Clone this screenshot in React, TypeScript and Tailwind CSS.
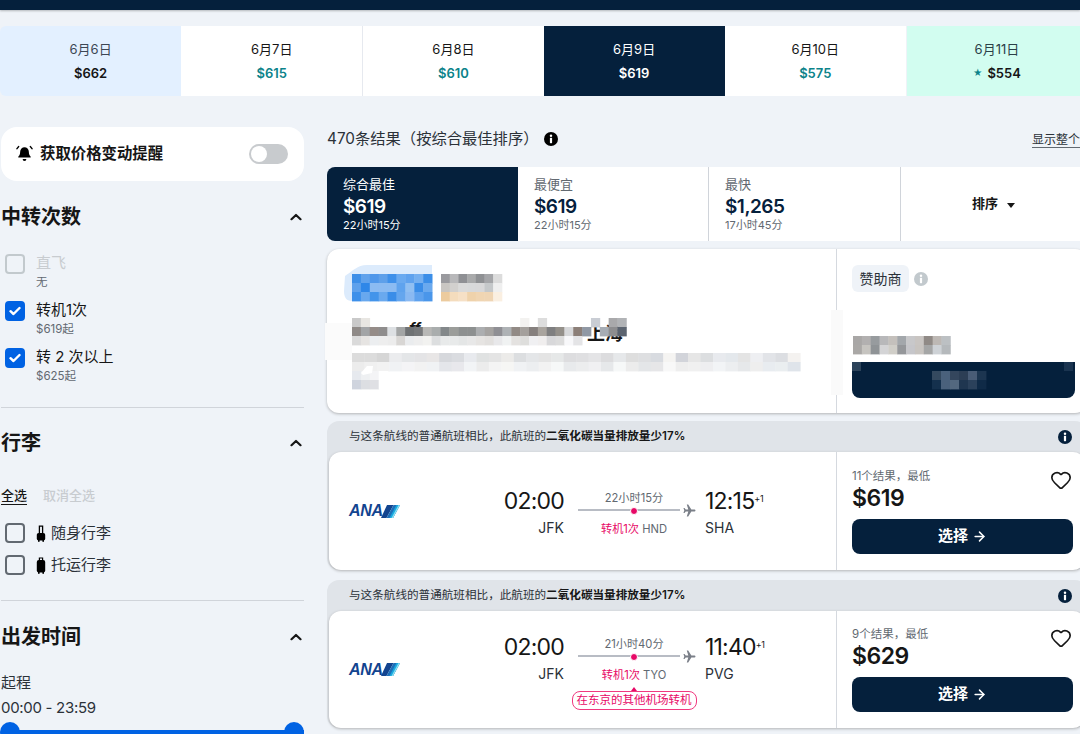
import { ArrowRight, Heart } from 'lucide-react';

const dates = [
  { day: '6月6日', price: '$662', cell: 'bg-[#e3f0ff] rounded-l-md', dayCls: 'text-[#3d4654]', priceCls: 'text-[#161616]' },
  { day: '6月7日', price: '$615', cell: 'bg-white', dayCls: 'text-[#161616]', priceCls: 'text-[#0c838a]' },
  { day: '6月8日', price: '$610', cell: 'bg-white border-l border-[#e6e9ef]', dayCls: 'text-[#161616]', priceCls: 'text-[#0c838a]' },
  { day: '6月9日', price: '$619', cell: 'bg-[#05203c]', dayCls: 'text-white', priceCls: 'text-white' },
  { day: '6月10日', price: '$575', cell: 'bg-white', dayCls: 'text-[#161616]', priceCls: 'text-[#0c838a]' },
  { day: '6月11日', price: '$554', cell: 'bg-[#d2fdf0] ml-px', dayCls: 'text-[#2c4048]', priceCls: 'text-[#161616]', star: true },
];

// 가려진 영역의 모자이크 색
const titleTop = ['#c9c9c9', '#e8e6e2', '', '', '', '', '', '', '', '', '', '', '', '', '', '', '', '', '', '#f3f2f0', '', '#dddddd', '', '', '', '', '', '#c9cdd4', '', '#a9a9ab', '#b1b3b6'];
const titleMid = ['#8f8a87', '#a2a4a6', '#958c88', '#8f8d8d', '#dde0e3', '#a3a5a5', '#6f7274', '#77797b', '#b8b8b6', '#a9adad', '#83888a', '#9b9d9a', '#8d9090', '#8d9090', '#acaeb0', '#a5a3a1', '#8f8f94', '#aeb2b5', '#928a85', '#a4a09c', '#86807e', '#a9a49e', '#7f7f80', '#94908a', '#d7d8da', '#8c7f78', '#9098a4', '', '#a6acb4', '#8d8d8f', '#5c6470'];
const titleBot = ['#dadada', '#e6e4e2', '#eceef0', '#eeeeee', '#ececec', '#d8d6d4', '#eaecee', '#eeeeee', '#f2f2f0', '#dcdedf', '#e8eaea', '#e8eaea', '#e4e6e6', '#e8e8e8', '#e6e4e2', '#e2e0de', '#e8e8ea', '#f0f2f2', '#e4e2e0', '#dededc', '#f0f0f2', '#f0eeee', '#d8d8da', '#dcdcdc', '#f8f8fa', '#e4e4e6'];
const descTop = ['#dcdcdc', '#dcdcdc', '#d6d6d6', '#ebecee', '#e4e6e8', '#e4e4e6', '#e8e6e6', '#d6d8dc', '#dadce0', '#e8eaee', '#e0e2e2', '#e4e4e4', '#ecebe9', '#dcdee0', '#e4e6e8', '#e4e4e4', '#e6e8e8', '#dddddf', '#dfdfe1', '#e4e4e6', '#dcdcde', '#e6e8ea', '#dedede', '#dedfe1', '#d8dbe0', '#f5f4f2', '#d2d4da', '#e6e6e6', '#dcdee0', '#e8eaee', '#e4e8ec', '#e4e4e4', '#eeeff2', '#e2e4e8', '#dcdee2', '#f4f2f0'];
const descBot = ['#ececec', '#f0f0f0', '#f2f2f2', '#f0f2f4', '#f4f4f6', '#f2f2f2', '#f0f2f4', '#e4e6ea', '#e8e8ec', '#f2f4f6', '#ececec', '#f4f4f4', '#f6f6f4', '#f0f2f4', '#eceef0', '#f2f2f2', '#f6f8f8', '#e8eaec', '#ecedee', '#f0f0f2', '#e6e8ea', '#f6f8f8', '#ececec', '#e4e6e8', '#e6e6e8', '#f8f8f8', '#eeeeee', '#f0f0f0', '#eeeef0', '#f2f4f6', '#eceef0', '#e6e8ea', '#eeeeee', '#e8ecf0', '#eaeef0', '#dfe4ea'];

const Mosaic = ({ x, y, w, h, rows }: { x: number; y: number; w: number; h: number; rows: string[][] }) => (
  <>
    {rows.map((row, r) =>
      row.map((fill, c) =>
        fill ? <rect key={`${r}-${c}`} x={x + c * w} y={y + r * h} width={w + 0.4} height={h + 0.4} fill={fill} /> : null
      )
    )}
  </>
);

const Chevron = () => (
  <svg width="12" height="8" viewBox="0 0 12 8" fill="none">
    <path d="M1.5 6.2 6 2l4.5 4.2" stroke="#161616" strokeWidth="2.2" strokeLinecap="round" strokeLinejoin="round" />
  </svg>
);

const InfoDot = ({ size = 14, bg = '#05203c', className = '' }: { size?: number; bg?: string; className?: string }) => (
  <svg width={size} height={size} viewBox="0 0 14 14" className={className}>
    <circle cx="7" cy="7" r="7" fill={bg} />
    <circle cx="7" cy="3.7" r="1.25" fill="#fff" />
    <rect x="5.9" y="5.8" width="2.2" height="5.4" rx="0.6" fill="#fff" />
  </svg>
);

const Check = ({ checked, disabled }: { checked?: boolean; disabled?: boolean }) => (
  <span
    className={`flex h-5 w-5 shrink-0 items-center justify-center rounded-[4px] border-2 ${
      checked ? 'border-[#0062e3] bg-[#0062e3]' : disabled ? 'border-[#c2c9cd]' : 'border-[#626971]'
    }`}
  >
    {checked && (
      <svg width="12" height="10" viewBox="0 0 12 10" fill="none">
        <path d="M1.5 5.2 4.5 8l6-6" stroke="#fff" strokeWidth="2.4" strokeLinecap="round" strokeLinejoin="round" />
      </svg>
    )}
  </span>
);

const SectionHead = ({ title, className }: { title: string; className: string }) => (
  <div className={`flex items-center justify-between pr-[2px] ${className}`}>
    <h2 className="text-[20px] leading-[28px] font-bold text-[#161616]">{title}</h2>
    <Chevron />
  </div>
);

const StopOption = ({ label, sub, checked, disabled }: { label: string; sub: string; checked?: boolean; disabled?: boolean }) => (
  <div className="flex h-[47px] gap-[11px] pl-1">
    <div className="pt-[2px]">
      <Check checked={checked} disabled={disabled} />
    </div>
    <div>
      <div className={`text-[15px] leading-[22px] ${disabled ? 'text-[#c8ccd0]' : 'text-[#161616]'}`}>{label}</div>
      <div className="text-[11.5px] leading-[16px] text-[#626971]">{sub}</div>
    </div>
  </div>
);

const BagIcon = ({ small }: { small?: boolean }) => (
  <svg width="10" height="17" viewBox="0 0 10 17">
    {small ? (
      <>
        <path d="M3.4 8V1.2h3.2V8" fill="none" stroke="#000" strokeWidth="1.3" />
        <rect x="0.8" y="8" width="8.4" height="7.6" rx="1.8" fill="#000" />
        <rect x="2" y="15" width="1.6" height="1.8" fill="#000" />
        <rect x="6.4" y="15" width="1.6" height="1.8" fill="#000" />
      </>
    ) : (
      <>
        <path d="M3.4 3.5V1h3.2v2.5" fill="none" stroke="#000" strokeWidth="1.2" />
        <rect x="0.8" y="3" width="8.4" height="12.6" rx="2" fill="#000" />
        <rect x="2" y="15" width="1.6" height="1.8" fill="#000" />
        <rect x="6.4" y="15" width="1.6" height="1.8" fill="#000" />
      </>
    )}
  </svg>
);

const BagOption = ({ label, small }: { label: string; small?: boolean }) => (
  <div className="flex h-[32px] items-center pl-1">
    <Check />
    <span className="ml-[11px] mr-[5px] flex">
      <BagIcon small={small} />
    </span>
    <span className="text-[15px] text-[#2b3138]">{label}</span>
  </div>
);

const SortTab = ({ title, price, sub, active, className }: { title: string; price: string; sub: string; active?: boolean; className: string }) => (
  <div className={`pt-2 pl-4 ${active ? 'rounded-l-lg bg-[#05203c] text-white' : 'bg-white'} ${className}`}>
    <div className={`text-[13px] leading-[18px] ${active ? 'text-white' : 'text-[#626971]'}`}>{title}</div>
    <div className={`mt-px text-[19px] leading-[25px] font-semibold tracking-[-0.5px] ${active ? 'text-white' : 'text-[#05203c]'}`}>{price}</div>
    <div className={`-mt-px text-[11px] leading-[14px] ${active ? 'text-white' : 'text-[#626971]'}`}>{sub}</div>
  </div>
);

const AnaLogo = () => (
  <div className="flex w-[52px] items-center">
    <span className="text-[16px] leading-none font-bold tracking-[-0.3px] text-[#13448f] italic [font-family:'Liberation_Sans',sans-serif]">
      ANA
    </span>
    <svg width="19" height="13" viewBox="0 0 19 13" className="-ml-[2px]">
      <path d="M6 0h6.5L5.5 13H0Z" fill="#13448f" />
      <path d="M12.5 0H19l-7 13H5.5Z" fill="#1d6fb8" />
      <path d="M15.5 0H19l-7 13H8.5Z" fill="#19a9e0" />
      <path d="M17.5 0H19l-7 13h-1.5Z" fill="#8fe0f0" />
    </svg>
  </div>
);

const PlaneIcon = () => (
  <svg width="13" height="13" viewBox="0 0 24 24" className="shrink-0">
    <path d="M23 12c0-1-1-1.8-2.4-1.8h-5.2L9.6 1H7l2.8 9.2H5L2.8 7.4H.8L2.4 12 .8 16.6h2L5 13.8h4.8L7 23h2.6l5.8-9.2h5.2C22 13.8 23 13 23 12Z" fill="#7a7f88" />
  </svg>
);

type Flight = {
  rowCls: string;
  priceTop: string;
  depart: string;
  arrive: string;
  from: string;
  to: string;
  duration: string;
  via: string;
  note?: string;
  count: string;
  price: string;
};

const FlightCard = ({ f, className }: { f: Flight; className: string }) => (
  <div className={`rounded-xl bg-[#e0e4e9] px-[2px] ${className}`}>
    <div className="flex h-[31px] items-center justify-between pr-[13px] pl-5 text-[11.6px] text-[#2b3138]">
      <span>
        与这条航线的普通航班相比，此航班的<b className="font-semibold text-[#161616]">二氧化碳当量排放量少17%</b>
      </span>
      <InfoDot />
    </div>
    <div className={`flex rounded-xl bg-white shadow-[0_1px_3px_rgba(37,32,31,0.3)] ${f.rowCls}`}>
      <div className="flex w-[507px] shrink-0 items-center pl-5">
        <AnaLogo />
        <div className={`ml-[101px] flex items-start ${f.note ? 'mt-px' : ''}`}>
          <div className="w-[62px] text-right">
            <div className="mt-[2px] text-[23px] leading-[30px] tracking-[-0.8px] text-[#161616]">{f.depart}</div>
            <div className="mt-[2px] text-[14px] leading-[20px] text-[#2b3138]">{f.from}</div>
          </div>
          <div className="relative ml-[14px] flex w-[112px] flex-col items-center pt-[6px]">
            <div className="text-[11.2px] leading-[16px] text-[#626971]">{f.duration}</div>
            <div className="-mt-[3px] flex h-[14px] w-[118px] items-center self-start">
              <div className="relative h-[1.5px] w-[102px] bg-[#b8bcc4]">
                <span className="absolute top-[-2.5px] left-[52px] box-content h-[6px] w-[6px] rounded-full border border-white bg-[#e70866]" />
              </div>
              <span className="ml-[3px]">
                <PlaneIcon />
              </span>
            </div>
            <div className="mt-[3px] text-[11.2px] leading-[18px] whitespace-nowrap text-[#626971]">
              <span className="text-[#e70866]">{f.via.split(' ')[0]}</span> {f.via.split(' ')[1]}
            </div>
            {f.note && (
              <div className="relative mt-[7px] rounded-lg border border-[#f0397f] px-[4px] text-[11.5px] leading-[17px] whitespace-nowrap text-[#e70866]">
                <span className="absolute top-[-5px] left-1/2 -ml-[3px] h-0 w-0 border-x-[3.5px] border-b-[4px] border-x-transparent border-b-[#e70866]" />
                {f.note}
              </div>
            )}
          </div>
          <div className="ml-[15px]">
            <div className="mt-[2px] text-[23px] leading-[30px] tracking-[-0.8px] whitespace-nowrap text-[#161616]">
              {f.arrive}
              <span className="align-[7px] text-[9px] leading-none tracking-[-0.3px]">+1</span>
            </div>
            <div className="mt-[2px] text-[14px] leading-[20px] text-[#2b3138]">{f.to}</div>
          </div>
        </div>
      </div>
      <div className={`flex-1 border-l border-[#d5d9df] pl-[15px] ${f.priceTop}`}>
        <div className="flex w-[220px] items-start justify-between">
          <span className="text-[11.5px] leading-[16px] text-[#626971]">{f.count}</span>
          <Heart size={22} strokeWidth={1.8} className="mt-px text-[#161616]" />
        </div>
        <div className="-mt-[8px] text-[23px] leading-[30px] font-semibold tracking-[-0.5px] text-[#161616]">{f.price}</div>
        <div className="mt-[6px] flex h-[35px] w-[221px] items-center justify-center gap-1 rounded-lg bg-[#05203c] text-[15px] font-semibold text-white">
          选择 <ArrowRight size={15} strokeWidth={2.4} />
        </div>
      </div>
    </div>
  </div>
);

const flights: Flight[] = [
  { rowCls: 'h-[118px]', priceTop: 'pt-4', depart: '02:00', arrive: '12:15', from: 'JFK', to: 'SHA', duration: '22小时15分', via: '转机1次 HND', count: '11个结果，最低', price: '$619' },
  { rowCls: 'h-[117px]', priceTop: 'pt-[15px]', depart: '02:00', arrive: '11:40', from: 'JFK', to: 'PVG', duration: '21小时40分', via: '转机1次 TYO', note: '在东京的其他机场转机', count: '9个结果，最低', price: '$629' },
];

export default function App() {
  return (
    <div className="h-[734px] w-[1080px] overflow-hidden bg-[#eff3f8] font-['Inter','Noto_Sans_CJK_SC',sans-serif]">
      <div className="h-[10px] bg-[#05203c] shadow-[0_1px_2px_rgba(0,0,0,0.25)]" />
      <div className="w-[1087px]">
        <div className="mt-4 grid h-[70px] grid-cols-6">
          {dates.map((d) => (
            <div key={d.day} className={`flex flex-col items-center justify-center ${d.cell}`}>
              <div className={`text-[13px] leading-[20px] ${d.dayCls}`}>{d.day}</div>
              <div className={`mt-[4px] flex items-center gap-[5px] text-[13px] leading-[20px] font-semibold ${d.priceCls}`}>
                {d.star && <span className="text-[9px] text-[#0c838a]">★</span>}
                {d.price}
              </div>
            </div>
          ))}
        </div>

        <div className="mt-[31px] flex items-start">
          {/* 필터 */}
          <aside className="ml-px w-[303px] shrink-0">
            <div className="flex h-[54px] items-center justify-between rounded-2xl bg-white pr-4 pl-[15px]">
              <div className="flex items-center gap-[7px]">
                <svg width="17" height="17" viewBox="0 0 17 17">
                  <path d="M8.5 2.2a4.3 4.3 0 0 0-4.3 4.3c0 3.4-1.4 4.6-1.9 5.2-.3.4 0 .9.5.9h11.4c.5 0 .8-.5.5-.9-.5-.6-1.9-1.8-1.9-5.2a4.3 4.3 0 0 0-4.3-4.3Z" fill="#000" />
                  <path d="M6.6 14h3.8a1.9 1.9 0 0 1-3.8 0Z" fill="#000" />
                  <path d="M2.6 1.6 1 3.6M14.4 1.6l1.6 2" stroke="#000" strokeWidth="1.5" strokeLinecap="round" />
                </svg>
                <span className="text-[15.4px] font-semibold text-[#161616]">获取价格变动提醒</span>
              </div>
              <div className="flex h-5 w-[39px] items-center rounded-full bg-[#c8cbce] pl-[2px]">
                <span className="h-4 w-4 rounded-full bg-white" />
              </div>
            </div>

            <SectionHead title="中转次数" className="mt-[22px]" />
            <div className="mt-[21px]">
              <StopOption label="直飞" sub="无" disabled />
              <StopOption label="转机1次" sub="$619起" checked />
              <StopOption label="转 2 次以上" sub="$625起" checked />
            </div>

            <div className="mt-[14px] border-t border-[#d0d4da]" />
            <SectionHead title="行李" className="mt-[21px]" />
            <div className="mt-[29px] flex gap-[16px] text-[13px] leading-[18px] font-medium">
              <span className="border-b border-[#161616] text-[#161616]">全选</span>
              <span className="text-[#c8ccd0]">取消全选</span>
            </div>
            <div className="mt-[12px]">
              <BagOption label="随身行李" small />
              <BagOption label="托运行李" />
            </div>

            <div className="mt-[19px] border-t border-[#d0d4da]" />
            <SectionHead title="出发时间" className="mt-[22px]" />
            <div className="mt-[21px] text-[15px] leading-[22px] text-[#2b3138]">起程</div>
            <div className="mt-[3px] text-[15px] leading-[22px] tracking-[-0.3px] text-[#2b3138]">00:00 - 23:59</div>
            <div className="relative mt-[3px] h-5">
              <div className="absolute top-[8px] right-0 left-0 h-[6px] bg-[#0062e3]" />
              <span className="absolute top-0 left-[-1px] h-5 w-5 rounded-full bg-[#0062e3]" />
              <span className="absolute top-0 right-0 h-5 w-5 rounded-full bg-[#0062e3]" />
            </div>
          </aside>

          {/* 결과 */}
          <main className="ml-[23px] min-w-0 flex-1">
            <div className="-mt-px flex h-[26px] items-center">
              <span className="text-[15.3px] text-[#2b3138]">470条结果（按综合最佳排序）</span>
              <InfoDot size={14} bg="#000" className="ml-[5px]" />
              <span className="mt-[2px] ml-auto w-[55px] overflow-hidden border-b border-[#626971] text-[12px] leading-[15px] whitespace-nowrap text-[#2b3138]">
                显示整个月
              </span>
            </div>
            <div className="mt-[15px] flex h-[74px] gap-px">
              <SortTab title="综合最佳" price="$619" sub="22小时15分" active className="w-[191px]" />
              <SortTab title="最便宜" price="$619" sub="22小时15分" className="-ml-px w-[190px]" />
              <div className="z-10 -mx-px w-px bg-[#d0d4da]" />
              <SortTab title="最快" price="$1,265" sub="17小时45分" className="w-[191px]" />
              <div className="z-10 -mx-px w-px bg-[#d0d4da]" />
              <div className="flex flex-1 items-center bg-white pl-[71px] text-[13px] font-semibold text-[#161616]">
                排序
                <span className="mt-[2px] ml-[9px] h-0 w-0 border-x-[4.5px] border-t-[5px] border-x-transparent border-t-[#161616]" />
              </div>
            </div>

            {/* 광고 카드, 내용은 모자이크 처리됨 */}
            <div className="relative mt-2 flex h-[164px] rounded-xl bg-white shadow-[0_1px_3px_rgba(37,32,31,0.3)]">
              <div className="w-[509px] shrink-0" />
              <div className="flex-1 border-l border-[#d5d9df] pt-4 pl-[15px]">
                <div className="flex items-center gap-[5px]">
                  <span className="flex h-[27px] w-[57px] items-center justify-center rounded-md bg-[#eff3f8] text-[14px] text-[#2b3138]">赞助商</span>
                  <InfoDot size={14} bg="#c2c9cd" />
                </div>
                <div className="mt-[70px] h-9 w-[223px] rounded-b-lg bg-[#05203c]" />
              </div>
              <span className="absolute top-[75px] left-[260px] text-[18px] leading-[20px] font-bold text-[#161616]">上海</span>
              <span className="absolute top-[70px] left-[82px] text-[15px] leading-[20px] font-bold text-[#161616] italic">ff</span>
              <svg className="absolute top-0 left-0 overflow-visible" width="760" height="164">
                <g transform="translate(-327 -249)">
                  <path d="M345 276c8-5 12-11 22-11h65v36h-80c-6 0-8-4-8-10Z" fill="#dcebfc" />
                  <Mosaic x={352} y={274} w={8.9} h={9} rows={[
                    ['#3d8fe8', '#60a2ec', '#4f97ea', '#5ea0ea', '#3e90ea', '#6aaaf0', '#5fa2ee', '#74aff0', '#3b8ee8'],
                    ['#5ea1ec', '#2f87e8', '#8bbbf2', '#8bbbf2', '#8bbbf2', '#5fa3ee', '#90bff2', '#3a8de8', '#6aa9ee'],
                    ['#3d90ea', '#68a8ee', '#4394ea', '#6aa9ee', '#3a8de8', '#65a6ee', '#8ab9f2', '#5fa2ee', '#4a96ea'],
                  ]} />
                  <Mosaic x={441} y={274} w={8.7} h={9} rows={[
                    ['#9a9a9e', '#b8b8ba', '#8f9094', '#a9aaab', '#8f9194', '#a5a6a9', '#dcdcdc'],
                    ['#c9c6c2', '#d2d0ce', '#dadada', '#d8d9da', '#d8d8d9', '#c5c8ca', '#efefef'],
                    ['#eccb9e', '#f4dcbd', '#f6e0c6', '#efd2ab', '#f0d5b2', '#efd5b4', '#faefe1'],
                  ]} />
                  <rect x="325" y="323" width="27" height="37" fill="#fbfbfb" />
                  <rect x="831" y="310" width="12" height="85" fill="#fafafa" />
                  <Mosaic x={352} y={318} w={8.85} h={9} rows={[titleTop, titleMid, titleBot]} />
                  <Mosaic x={352} y={353} w={12.45} h={9} rows={[descTop, descBot]} />
                  <Mosaic x={352} y={371} w={8.9} h={9} rows={[['#e6e9ee', '#eef0f2', '#f4f4f6', '#ffffff'], ['#cfd4de', '#dcdee2', '#dfe0e4', '#ffffff']]} />
                  <path d="M361 373l6-7h6l-1 7-9 2Z" fill="#fff" />
                  <Mosaic x={853} y={336} w={8.85} h={9} rows={[
                    ['#a9a7a6', '#b2b0b0', '#979b9e', '#b8b8ba', '#c4c0bc', '#a3a7ab', '#c8c8ca', '#c9c5c2', '#908a86', '#bdb8b4', '#bcc0c3'],
                    ['#aaa8a6', '#c6c4c0', '#8f9396', '#d4d4d6', '#d0cec8', '#95979a', '#c6c6ca', '#c8c4c0', '#a5a6a6', '#ced2d6', '#b5b9bc'],
                  ]} />
                  <Mosaic x={932} y={371} w={9} h={9} rows={[
                    ['#34495f', '#4a617c', '#34465d', '#2c3e55', '#495c76', '#1c3550'],
                    ['#14304d', '#4a617c', '#53687f', '#1f3650', '#2b415b', '#0f2a47'],
                  ]} />
                  <rect x="852" y="362" width="9" height="9" fill="#2c435a" />
                  <rect x="1064" y="362" width="9" height="9" fill="#1a3450" />
                </g>
              </svg>
            </div>

            <FlightCard f={flights[0]} className="mt-2" />
            <FlightCard f={flights[1]} className="mt-[10px]" />
          </main>
        </div>
      </div>
    </div>
  );
}
